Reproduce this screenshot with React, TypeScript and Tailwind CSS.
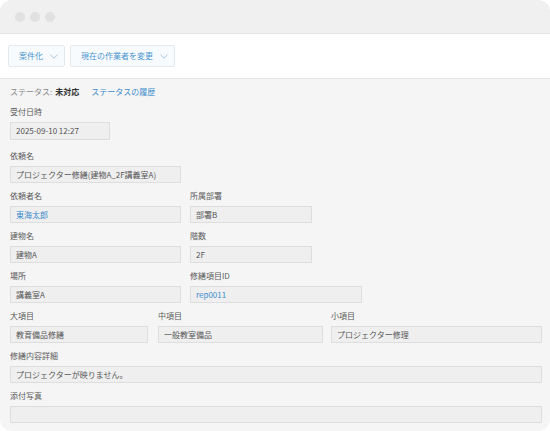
import React from 'react';

const font = { fontFamily: '"Noto Sans CJK JP", "Noto Sans", sans-serif' };

function Chevron() {
  return (
    <svg width="8" height="5" viewBox="0 0 8 5" className="ml-[7px] shrink-0">
      <path d="M0.5 0.8 L4 4.2 L7.5 0.8" fill="none" stroke="#9dbdd8" strokeWidth="0.9" />
    </svg>
  );
}

function ToolButton({ label }: { label: string }) {
  return (
    <button
      type="button"
      className="flex h-[22px] items-center rounded-[2px] border border-[#e4ebf0] bg-[#f8fbfd] pl-[10px] pr-[6px] text-[8px] text-[#4a94cf]"
    >
      {label}
      <Chevron />
    </button>
  );
}

function Field({
  label,
  value,
  width,
  blue,
  tall,
}: {
  label: string;
  value?: string;
  width: string;
  blue?: boolean;
  tall?: boolean;
}) {
  return (
    <div className={`flex flex-col ${width}`}>
      <div className="h-[12px] text-[8px] leading-[12px] text-[#5a5a5a]">{label}</div>
      <div
        className={`mt-[4px] flex items-center border border-[#dedede] bg-[#efefef] pl-[5px] text-[8px] ${
          tall ? 'h-[18px]' : 'h-[17px]'
        } ${blue ? 'text-[#3b8bcc]' : 'text-[#555]'}`}
      >
        {value}
      </div>
    </div>
  );
}

export default function App() {
  return (
    <div className="h-[431px] w-[550px] bg-white" style={font}>
      <div className="flex h-full w-full flex-col overflow-hidden rounded-[12px] bg-[#f5f5f5]">
        {/* title bar */}
        <div className="flex h-[34px] shrink-0 items-center gap-[5px] border-b border-[#e6e6e6] bg-[#f0f0f0] pl-[15px]">
          <span className="h-[10px] w-[10px] rounded-full bg-[#e1e1e1]" />
          <span className="h-[10px] w-[10px] rounded-full bg-[#e1e1e1]" />
          <span className="h-[10px] w-[10px] rounded-full bg-[#e1e1e1]" />
        </div>

        {/* toolbar */}
        <div className="flex h-[45px] shrink-0 items-center gap-[5px] border-b border-[#e6e6e6] bg-white pl-[8px]">
          <ToolButton label="案件化" />
          <ToolButton label="現在の作業者を変更" />
        </div>

        {/* body */}
        <div className="flex flex-col pl-[10px] pt-[7px]">
          <div className="flex h-[12px] items-center text-[8px] leading-[12px]">
            <span className="text-[#888]">ステータス:</span>
            <span className="ml-[3px] font-bold text-[#333]">未対応</span>
            <span className="ml-[12px] text-[#3b8bcc]">ステータスの履歴</span>
          </div>

          <div className="mt-[8px]">
            <Field label="受付日時" value="2025-09-10 12:27" width="w-[100px]" tall />
          </div>
          <div className="mt-[10px]">
            <Field label="依頼名" value="プロジェクター修繕(建物A_2F講義室A)" width="w-[171px]" />
          </div>
          <div className="mt-[7px] flex gap-[9px]">
            <Field label="依頼者名" value="東海太郎" width="w-[171px]" blue />
            <Field label="所属部署" value="部署B" width="w-[122px]" />
          </div>
          <div className="mt-[7px] flex gap-[9px]">
            <Field label="建物名" value="建物A" width="w-[171px]" />
            <Field label="階数" value="2F" width="w-[122px]" />
          </div>
          <div className="mt-[7px] flex gap-[9px]">
            <Field label="場所" value="講義室A" width="w-[171px]" />
            <Field label="修繕項目ID" value="rep0011" width="w-[172px]" blue />
          </div>
          <div className="mt-[7px] flex">
            <Field label="大項目" value="教育備品修繕" width="w-[138px]" />
            <div className="ml-[10px]">
              <Field label="中項目" value="一般教室備品" width="w-[165px]" />
            </div>
            <div className="ml-[8px]">
              <Field label="小項目" value="プロジェクター修理" width="w-[211px]" />
            </div>
          </div>
          <div className="mt-[7px]">
            <Field label="修繕内容詳細" value="プロジェクターが映りません。" width="w-[532px]" />
          </div>
          <div className="mt-[7px]">
            <Field label="添付写真" width="w-[532px]" />
          </div>
        </div>
      </div>
    </div>
  );
}
